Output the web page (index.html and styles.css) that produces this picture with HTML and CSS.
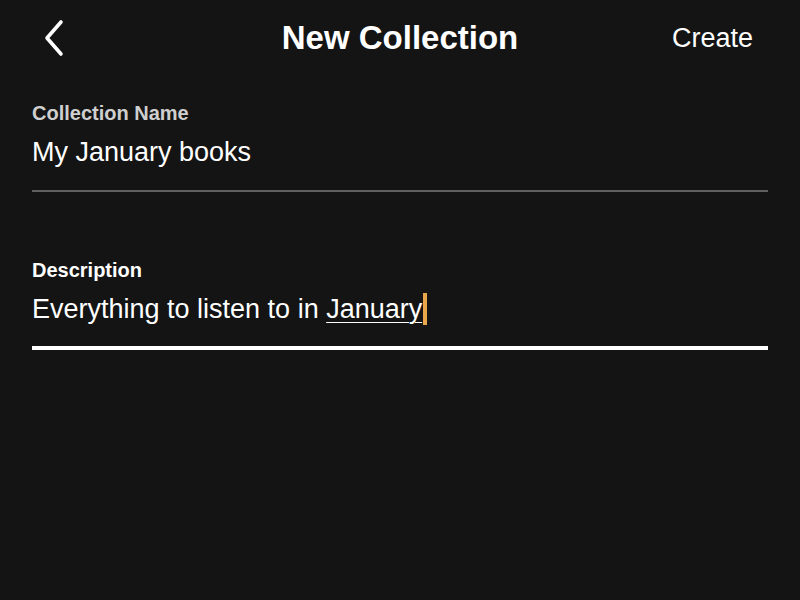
FILE: index.html
```html
<!DOCTYPE html>
<html>
<head>
    <title>New Collection</title>
    <link rel="stylesheet" href="styles.css">
</head>
<body>
    <div class="screen">
        <div class="top-bar">
            <button class="back-btn" aria-label="Back">
                <svg width="24" height="40" viewBox="0 0 24 40">
                    <path d="M19 4 L5 20 L19 36" fill="none" stroke="#fff" stroke-width="3.6" stroke-linecap="round" stroke-linejoin="round"/>
                </svg>
            </button>
            <h1 class="title">New Collection</h1>
            <button class="create-btn">Create</button>
        </div>

        <div class="field">
            <label class="field-label">Collection Name</label>
            <div class="field-value">My January books</div>
        </div>

        <div class="field active">
            <label class="field-label">Description</label>
            <div class="field-value">Everything to listen to in <span class="suggest">January</span><span class="caret"></span></div>
        </div>
    </div>
</body>
</html>
```

FILE: styles.css
```css
body {
    margin: 0;
    background-color: #141414;
    color: #fff;
    font-family: "Liberation Sans", sans-serif;
}

.screen {
    width: 800px;
    height: 600px;
    padding: 0 32px;
    box-sizing: border-box;
}

.top-bar {
    display: flex;
    align-items: center;
    justify-content: space-between;
    height: 76px;
}

.back-btn {
    background: none;
    border: none;
    padding: 0 0 0 10px;
    width: 120px;
    text-align: left;
    cursor: pointer;
}

.back-btn svg {
    display: block;
}

.title {
    margin: 0;
    font-size: 33px;
    font-weight: bold;
}

.create-btn {
    background: none;
    border: none;
    width: 120px;
    padding: 0 15px 0 0;
    text-align: right;
    color: #fff;
    font-family: inherit;
    font-size: 27px;
    cursor: pointer;
}

.field {
    padding-top: 24px;
    border-bottom: 2px solid #606060;
    padding-bottom: 20px;
}

.field + .field {
    margin-top: 41px;
}

.field-label {
    display: block;
    font-size: 20px;
    font-weight: bold;
    color: #cfcfcf;
    line-height: 26px;
}

.field-value {
    font-size: 27px;
    line-height: 36px;
    margin-top: 8px;
}

.field.active {
    border-bottom: 4px solid #fff;
    padding-bottom: 19px;
}

.field.active .field-label {
    color: #fff;
}

.suggest {
    text-decoration: underline;
    text-underline-offset: 4px;
    text-decoration-thickness: 1px;
}

.caret {
    display: inline-block;
    width: 4px;
    height: 32px;
    background-color: #e9a64a;
    vertical-align: -7px;
    margin-left: 1px;
}
```
